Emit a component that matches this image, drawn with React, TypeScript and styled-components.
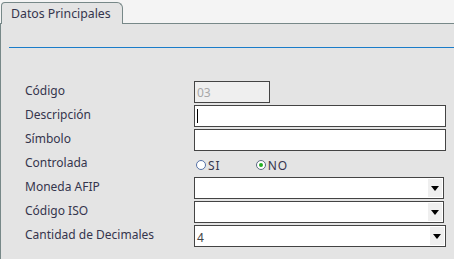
import React from "react";
import styled, { createGlobalStyle } from "styled-components";

const Global = createGlobalStyle`
  html, body { margin: 0; padding: 0; background: #e4e4e4; }
  body { font-family: "Noto Sans", "DejaVu Sans", sans-serif; font-size: 12px; color: #35354d; }
`;

const Page = styled.div`
  width: 454px;
  height: 259px;
  overflow: hidden;
  display: flex;
  flex-direction: column;
`;

const TabBar = styled.div`
  height: 22px;
  background: #f4f4f4;
  border-bottom: 1px solid #778888;
  display: flex;
  align-items: flex-end;
  padding-left: 1px;
  padding-top: 1px;
`;

const Tab = styled.div`
  height: 22px;
  box-sizing: border-box;
  width: 122px;
  margin-bottom: -1px;
  background: #e4e4e4;
  border: 1px solid #778888;
  border-bottom: none;
  border-radius: 4px 6px 0 0;
  padding: 2px 0 0 9px;
  font-size: 12.3px;
  line-height: 17px;
  color: #35354d;
`;

const Panel = styled.div`
  flex: 1;
  border-left: 1px solid #778888;
  padding-top: 23px;
`;

const SectionRule = styled.div`
  margin-left: 8px;
  height: 1px;
  background: #1a7cc9;
`;

const Form = styled.div`
  display: grid;
  grid-template-columns: 169px 1fr;
  row-gap: 2px;
  padding: 33px 0 0 24px;
`;

const Label = styled.div`
  height: 22px;
  line-height: 20px;
  white-space: nowrap;
`;

const Control = styled.div`
  height: 22px;
  display: flex;
  align-items: center;
`;

const TextBox = styled.div<{ $w: number; $disabled?: boolean }>`
  width: ${(p) => p.$w}px;
  height: 22px;
  box-sizing: border-box;
  border: 1px solid #444;
  background: ${(p) => (p.$disabled ? "#efefef" : "#fff")};
  color: ${(p) => (p.$disabled ? "#a8a8a8" : "#333")};
  display: flex;
  align-items: center;
  padding-left: 2px;
  font-size: 12px;
`;

const Caret = styled.span`
  width: 1px;
  height: 14px;
  background: #000;
`;

const Select = styled.div<{ $w: number }>`
  width: ${(p) => p.$w}px;
  height: 22px;
  box-sizing: border-box;
  border: 1px solid #444;
  background: #fff;
  display: flex;
  align-items: stretch;
  font-size: 12px;
  color: #444;
`;

const SelectValue = styled.div`
  flex: 1;
  display: flex;
  align-items: center;
  padding-left: 2px;
  padding-top: 2px;
`;

const Arrow = styled.div`
  width: 14px;
  margin: 1px 1px 1px 0;
  background: #efefef;
  display: flex;
  align-items: center;
  justify-content: center;
`;

const Triangle = styled.span`
  width: 0;
  height: 0;
  border-left: 4px solid transparent;
  border-right: 4px solid transparent;
  border-top: 5px solid #000;
`;

const RadioGroup = styled.div`
  display: flex;
  align-items: center;
  padding-left: 2px;
  padding-top: 2px;
`;

const RadioOption = styled.label<{ $gap?: number }>`
  display: flex;
  align-items: center;
  gap: 2px;
  margin-right: ${(p) => p.$gap ?? 0}px;
  font-size: 12px;
  letter-spacing: 1px;
  color: #35354d;
`;

const RadioCircle = styled.span<{ $checked?: boolean }>`
  width: 10px;
  height: 10px;
  box-sizing: border-box;
  border-radius: 50%;
  border: 1px solid ${(p) => (p.$checked ? "#5a6a80" : "#5572a8")};
  background: #fff;
  display: flex;
  align-items: center;
  justify-content: center;
  &::after {
    content: "";
    width: 4px;
    height: 4px;
    border-radius: 50%;
    background: ${(p) => (p.$checked ? "#22b022" : "transparent")};
  }
`;

export default function App() {
  return (
    <Page>
      <Global />
      <TabBar>
        <Tab>Datos Principales</Tab>
      </TabBar>
      <Panel>
        <SectionRule />
        <Form>
          <Label>Código</Label>
          <Control>
            <TextBox $w={76} $disabled>03</TextBox>
          </Control>
          <Label>Descripción</Label>
          <Control>
            <TextBox $w={252}>
              <Caret />
            </TextBox>
          </Control>
          <Label>Símbolo</Label>
          <Control>
            <TextBox $w={252} />
          </Control>
          <Label>Controlada</Label>
          <Control>
            <RadioGroup>
              <RadioOption $gap={35}>
                <RadioCircle />
                SI
              </RadioOption>
              <RadioOption>
                <RadioCircle $checked />
                NO
              </RadioOption>
            </RadioGroup>
          </Control>
          <Label>Moneda AFIP</Label>
          <Control>
            <Select $w={250}>
              <SelectValue />
              <Arrow>
                <Triangle />
              </Arrow>
            </Select>
          </Control>
          <Label>Código ISO</Label>
          <Control>
            <Select $w={250}>
              <SelectValue />
              <Arrow>
                <Triangle />
              </Arrow>
            </Select>
          </Control>
          <Label>Cantidad de Decimales</Label>
          <Control>
            <Select $w={252}>
              <SelectValue>4</SelectValue>
              <Arrow>
                <Triangle />
              </Arrow>
            </Select>
          </Control>
        </Form>
      </Panel>
    </Page>
  );
}
